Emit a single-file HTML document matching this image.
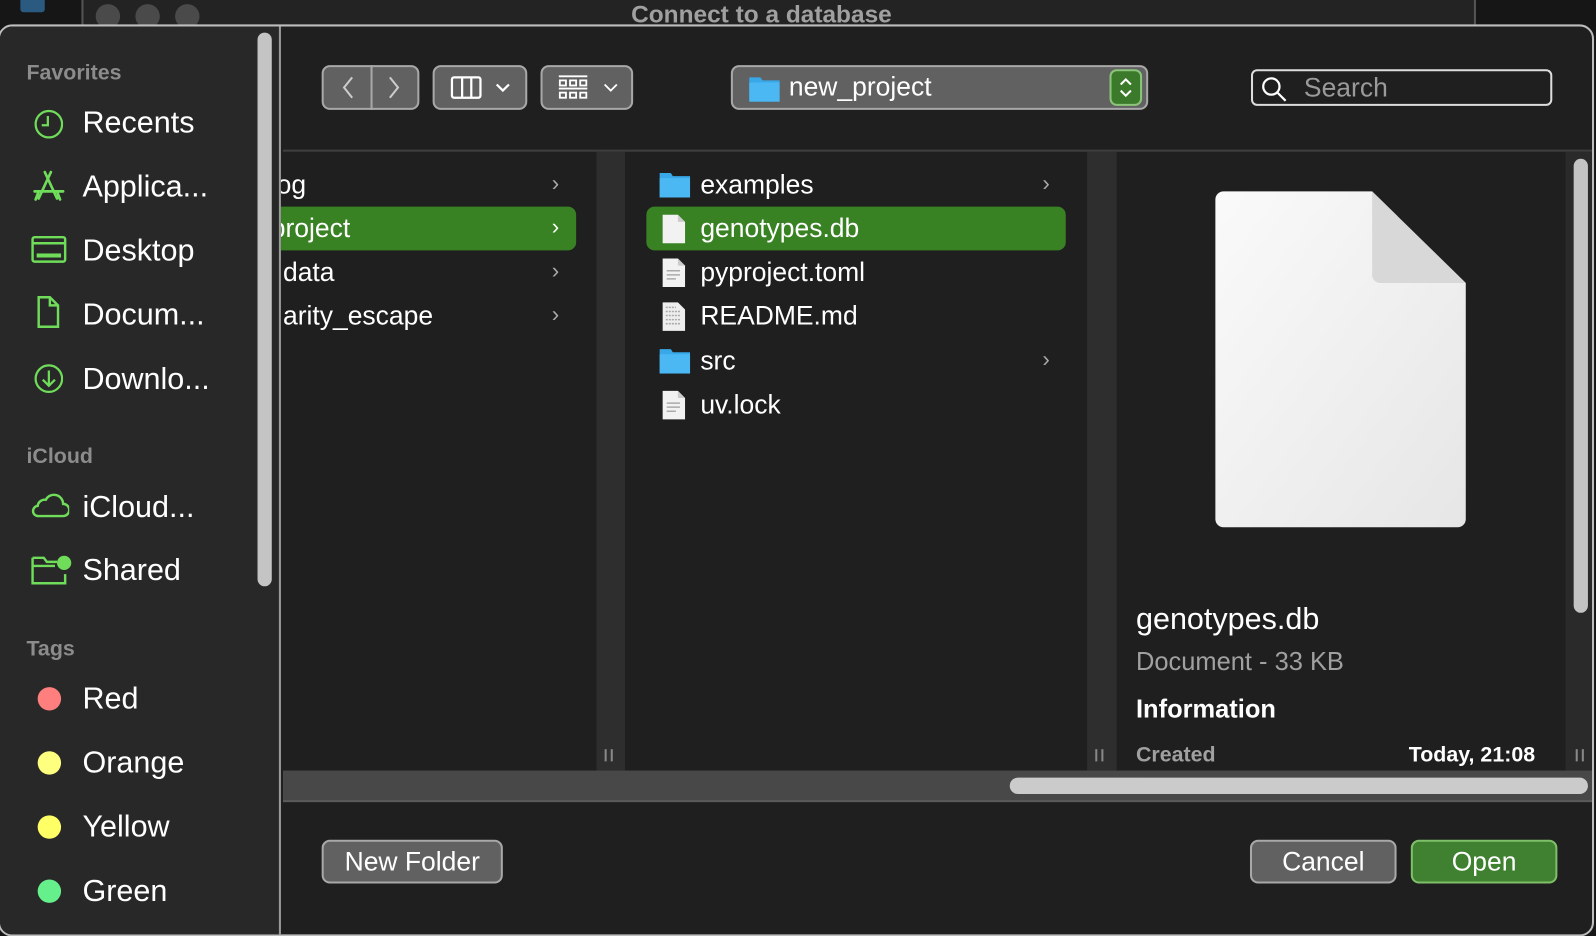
<!DOCTYPE html>
<html><head><meta charset="utf-8"><style>
*{box-sizing:border-box;margin:0;padding:0}
body{width:1596px;height:922px;background:#161616;position:relative;overflow:hidden;font-family:"Liberation Sans",sans-serif;color:#fff}
#w{position:absolute;left:0;top:0;width:1568px;height:906px;transform:scale(1.0179);transform-origin:0 0}
.abs{position:absolute}
.dlg{left:-2px;top:24px;width:1568px;height:896px;border:2px solid #bdbdbd;border-radius:14px;background:#1f1f1f;overflow:hidden}
.side{left:0;top:0;width:276px;height:100%;background:#282828;border-right:2px solid #9a9a9a;z-index:5}
.sh{position:absolute;left:26px;font-size:21px;font-weight:bold;color:#8c8c8c}
.si{position:absolute;left:81px;font-size:30px;color:#fff}
.ic{position:absolute;left:30px}
.btn{position:absolute;background:#616161;border:2px solid #a8a8a8;border-radius:8px}
.row{position:absolute;font-size:26px;color:#fff;height:43px;line-height:43px}
.chev{position:absolute;font-size:22px;color:#aaa}
.sel{background:#398224;border-radius:8px}
</style></head><body><div id="w">
<div class="abs" style="left:80px;top:-20px;width:1370px;height:60px;border:2px solid #555;border-radius:14px;background:#232323"></div>
<div class="abs" style="left:94px;top:4px;width:24px;height:24px;border-radius:50%;background:#4a4a4a"></div>
<div class="abs" style="left:133px;top:4px;width:24px;height:24px;border-radius:50%;background:#4a4a4a"></div>
<div class="abs" style="left:172px;top:4px;width:24px;height:24px;border-radius:50%;background:#4a4a4a"></div>
<div class="abs" style="left:620px;top:1px;font-size:24px;font-weight:bold;color:#a0a0a0">Connect to a database</div>
<div class="abs" style="left:20px;top:-6px;width:24px;height:18px;background:#2b5a80;border-radius:3px"></div>

<div class="abs dlg">
 <div class="abs side">
  <div class="abs" style="left:253px;top:6px;width:14px;height:544px;background:#c4c4c4;border-radius:7px"></div>
  <div class="sh" style="top:34px">Favorites</div>
  <svg class="ic" style="top:80px" width="32" height="32" viewBox="0 0 32 32" fill="none" stroke="#6fdc5a" stroke-width="2.2"><circle cx="18" cy="16" r="13"/><path d="M17 8v9h-6"/></svg>
  <div class="si" style="top:78px">Recents</div>
  <svg class="ic" style="top:140px" width="36" height="34" viewBox="0 0 36 34" fill="none" stroke="#6fdc5a" stroke-width="2.6" stroke-linecap="round"><path d="M14 3l12 26M20 3L8 29M4 22h28M26 22l3 8M8 22l-3 8"/></svg>
  <div class="si" style="top:141px">Applica...</div>
  <svg class="ic" style="top:204px" width="36" height="30" viewBox="0 0 36 30" fill="none" stroke="#6fdc5a" stroke-width="2.4"><rect x="2" y="3" width="32" height="24" rx="2"/><path d="M2 9h32"/><rect x="6" y="19" width="24" height="4" fill="#6fdc5a" stroke="none"/></svg>
  <div class="si" style="top:204px">Desktop</div>
  <svg class="ic" style="top:264px" width="32" height="34" viewBox="0 0 32 34" fill="none" stroke="#6fdc5a" stroke-width="2.4"><path d="M8 2h11l8 8v21H8z M19 2v8h8"/></svg>
  <div class="si" style="top:267px">Docum...</div>
  <svg class="ic" style="top:330px" width="32" height="32" viewBox="0 0 32 32" fill="none" stroke="#6fdc5a" stroke-width="2.2"><circle cx="18" cy="16" r="13"/><path d="M18 8v15M12 17l6 6 6-6"/></svg>
  <div class="si" style="top:330px">Downlo...</div>
  <div class="sh" style="top:411px">iCloud</div>
  <svg class="ic" style="top:456px" width="38" height="28" viewBox="0 0 38 28" fill="none" stroke="#6fdc5a" stroke-width="2.4"><path d="M8 25h24a6 6 0 0 0 0-12 9 9 0 0 0-17-4 7 7 0 0 0-8 6 5 5 0 0 0 1 10z"/></svg>
  <div class="si" style="top:456px">iCloud...</div>
  <svg class="ic" style="top:516px" width="42" height="34" viewBox="0 0 42 34" fill="none" stroke="#6fdc5a" stroke-width="2.4"><path d="M2 6h11l3 4h10M2 6v25h32V22M2 14h22"/><circle cx="33" cy="11" r="7" fill="#6fdc5a" stroke="none"/></svg>
  <div class="si" style="top:518px">Shared</div>
  <div class="sh" style="top:600px">Tags</div>
  <div class="abs" style="left:37px;top:649px;width:23px;height:23px;border-radius:50%;background:#ff7f7f"></div>
  <div class="si" style="top:644px">Red</div>
  <div class="abs" style="left:37px;top:712px;width:23px;height:23px;border-radius:50%;background:#ffff7f"></div>
  <div class="si" style="top:707px">Orange</div>
  <div class="abs" style="left:37px;top:775px;width:23px;height:23px;border-radius:50%;background:#ffff66"></div>
  <div class="si" style="top:770px">Yellow</div>
  <div class="abs" style="left:37px;top:838px;width:23px;height:23px;border-radius:50%;background:#66f08c"></div>
  <div class="si" style="top:833px">Green</div>
 </div>

 <div class="btn" style="left:316px;top:38px;width:50px;height:44px;border-radius:8px 0 0 8px"></div>
 <div class="btn" style="left:364px;top:38px;width:48px;height:44px;border-radius:0 8px 8px 0"></div>
 <svg class="abs" style="left:330px;top:46px" width="70" height="28" viewBox="0 0 70 28" fill="none" stroke="#ccc" stroke-width="2"><path d="M16 4L8 14l8 10M53 4l8 10-8 10"/></svg>
 <div class="btn" style="left:425px;top:38px;width:93px;height:44px"></div>
 <svg class="abs" style="left:442px;top:46px" width="70" height="28" viewBox="0 0 70 28" fill="none" stroke="#fff" stroke-width="2.2"><rect x="2" y="4" width="28" height="20" rx="2"/><path d="M12 4v20M21 4v20M46 11l6 6 6-6"/></svg>
 <div class="btn" style="left:531px;top:38px;width:91px;height:44px"></div>
 <svg class="abs" style="left:548px;top:46px" width="70" height="28" viewBox="0 0 70 28" fill="none" stroke="#fff" stroke-width="1.8"><path d="M1 3h28M1 15h28"/><rect x="2" y="7" width="6" height="5"/><rect x="12" y="7" width="6" height="5"/><rect x="22" y="7" width="6" height="5"/><rect x="2" y="19" width="6" height="5"/><rect x="12" y="19" width="6" height="5"/><rect x="22" y="19" width="6" height="5"/><path d="M46 11l6 6 6-6"/></svg>
 <div class="btn" style="left:718px;top:38px;width:410px;height:44px"></div>
 <svg class="abs" style="left:736px;top:48px" width="30" height="26" viewBox="0 0 30 26"><path d="M0 2h11l2 3h17v21H0z" fill="#38a8e8"/><rect x="0" y="7" width="30" height="19" fill="#4bb8f4"/></svg>
 <div class="abs" style="left:775px;top:44px;font-size:26px">new_project</div>
 <div class="abs" style="left:1090px;top:42px;width:32px;height:36px;background:#3c7a2b;border:2px solid #8bc47a;border-radius:7px"></div>
 <svg class="abs" style="left:1096px;top:48px" width="20" height="24" viewBox="0 0 20 24" fill="none" stroke="#fff" stroke-width="2"><path d="M5 9l5-5 5 5M5 15l5 5 5-5"/></svg>
 <div class="abs" style="left:1229px;top:42px;width:296px;height:36px;border:2px solid #ddd;border-radius:6px"></div>
 <svg class="abs" style="left:1238px;top:48px" width="28" height="28" viewBox="0 0 28 28" fill="none" stroke="#fff" stroke-width="2.2"><circle cx="11" cy="11" r="8"/><path d="M17 17l8 8"/></svg>
 <div class="abs" style="left:1281px;top:45px;font-size:26px;color:#9a9a9a">Search</div>
 <div class="abs" style="left:278px;top:121px;width:1290px;height:2px;background:#3f3f3f"></div>

 <div class="abs" style="left:586px;top:123px;width:28px;height:608px;background:#2e2e2e"></div>
 <div class="abs" style="left:594px;top:710px;width:8px;height:12px;border-left:2px solid #888;border-right:2px solid #888"></div>
 <div class="row" style="left:266px;top:134px">log</div><div class="chev" style="left:542px;top:141px">›</div>
 <div class="row sel" style="left:260px;top:177px;width:306px"></div>
 <div class="row" style="left:266px;top:177px">project</div><div class="chev" style="left:542px;top:184px;color:#fff">›</div>
 <div class="row" style="left:278px;top:220px">data</div><div class="chev" style="left:542px;top:227px">›</div>
 <div class="row" style="left:278px;top:263px">arity_escape</div><div class="chev" style="left:542px;top:270px">›</div>

 <div class="abs" style="left:1068px;top:123px;width:29px;height:608px;background:#2e2e2e"></div>
 <div class="abs" style="left:1076px;top:710px;width:8px;height:12px;border-left:2px solid #888;border-right:2px solid #888"></div>
 <div class="row sel" style="left:635px;top:177px;width:412px"></div>
 <svg class="abs" style="left:648px;top:142px" width="30" height="26" viewBox="0 0 30 26"><path d="M0 2h11l2 3h17v21H0z" fill="#38a8e8"/><rect x="0" y="7" width="30" height="19" fill="#4bb8f4"/></svg>
 <div class="row" style="left:688px;top:134px">examples</div><div class="chev" style="left:1024px;top:141px">›</div>
 <svg class="abs" style="left:650px;top:184px" width="24" height="30" viewBox="0 0 24 30"><path d="M1 1h15l7 7v21H1z" fill="#f2f2f2"/><path d="M16 1v7h7" fill="#ccc"/></svg>
 <div class="row" style="left:688px;top:177px">genotypes.db</div>
 <svg class="abs" style="left:650px;top:227px" width="24" height="30" viewBox="0 0 24 30"><path d="M1 1h15l7 7v21H1z" fill="#f2f2f2"/><path d="M16 1v7h7" fill="#ccc"/><path d="M5 13h13M5 17h13M5 21h9" stroke="#aaa" stroke-width="1.5"/></svg>
 <div class="row" style="left:688px;top:220px">pyproject.toml</div>
 <svg class="abs" style="left:650px;top:270px" width="24" height="30" viewBox="0 0 24 30"><path d="M1 1h15l7 7v21H1z" fill="#eee"/><path d="M4 6h10M4 10h15M4 14h15M4 18h15M4 22h15" stroke="#aaa" stroke-width="1.5" stroke-dasharray="2 1"/></svg>
 <div class="row" style="left:688px;top:263px">README.md</div>
 <svg class="abs" style="left:648px;top:315px" width="30" height="26" viewBox="0 0 30 26"><path d="M0 2h11l2 3h17v21H0z" fill="#38a8e8"/><rect x="0" y="7" width="30" height="19" fill="#4bb8f4"/></svg>
 <div class="row" style="left:688px;top:307px">src</div><div class="chev" style="left:1024px;top:314px">›</div>
 <svg class="abs" style="left:650px;top:357px" width="24" height="30" viewBox="0 0 24 30"><path d="M1 1h15l7 7v21H1z" fill="#f2f2f2"/><path d="M16 1v7h7" fill="#ccc"/><path d="M5 13h13M5 17h13M5 21h9" stroke="#aaa" stroke-width="1.5"/></svg>
 <div class="row" style="left:688px;top:350px">uv.lock</div>

 <svg class="abs" style="left:1190px;top:160px" width="256" height="336" viewBox="0 0 256 336"><defs><linearGradient id="g" x1="0" y1="0" x2="1" y2="1"><stop offset="0" stop-color="#fafafa"/><stop offset="1" stop-color="#e6e6e6"/></linearGradient></defs><path d="M12 2h146l92 90v232a8 8 0 0 1-8 8H12a8 8 0 0 1-8-8V10a8 8 0 0 1 8-8z" fill="url(#g)"/><path d="M158 2v82a8 8 0 0 0 8 8h84z" fill="#d8d8d8"/></svg>
 <div class="abs" style="left:1116px;top:566px;font-size:30px">genotypes.db</div>
 <div class="abs" style="left:1116px;top:610px;font-size:25px;color:#a0a0a0">Document - 33 KB</div>
 <div class="abs" style="left:1116px;top:657px;font-size:25px;font-weight:bold">Information</div>
 <div class="abs" style="left:1116px;top:704px;font-size:21px;font-weight:bold;color:#a0a0a0">Created</div>
 <div class="abs" style="left:1384px;top:704px;font-size:21px;font-weight:bold">Today, 21:08</div>
 <div class="abs" style="left:1538px;top:123px;width:30px;height:608px;background:#2a2a2a"></div>
 <div class="abs" style="left:1546px;top:130px;width:14px;height:446px;background:#c4c4c4;border-radius:7px"></div>
 <div class="abs" style="left:1548px;top:710px;width:8px;height:12px;border-left:2px solid #888;border-right:2px solid #888"></div>

 <div class="abs" style="left:278px;top:731px;width:1290px;height:31px;background:#484848;border-bottom:2px solid #5a5a5a"></div>
 <div class="abs" style="left:992px;top:738px;width:568px;height:16px;background:#cbcbcb;border-radius:8px"></div>

 <div class="btn" style="left:316px;top:799px;width:178px;height:43px"></div>
 <div class="abs" style="left:316px;top:805px;width:178px;text-align:center;font-size:26px">New Folder</div>
 <div class="btn" style="left:1228px;top:799px;width:144px;height:43px"></div>
 <div class="abs" style="left:1228px;top:805px;width:144px;text-align:center;font-size:26px">Cancel</div>
 <div class="btn" style="left:1386px;top:799px;width:144px;height:43px;background:#3f8130;border-color:#7fbf6a"></div>
 <div class="abs" style="left:1386px;top:805px;width:144px;text-align:center;font-size:26px">Open</div>
</div>
</div></body></html>
